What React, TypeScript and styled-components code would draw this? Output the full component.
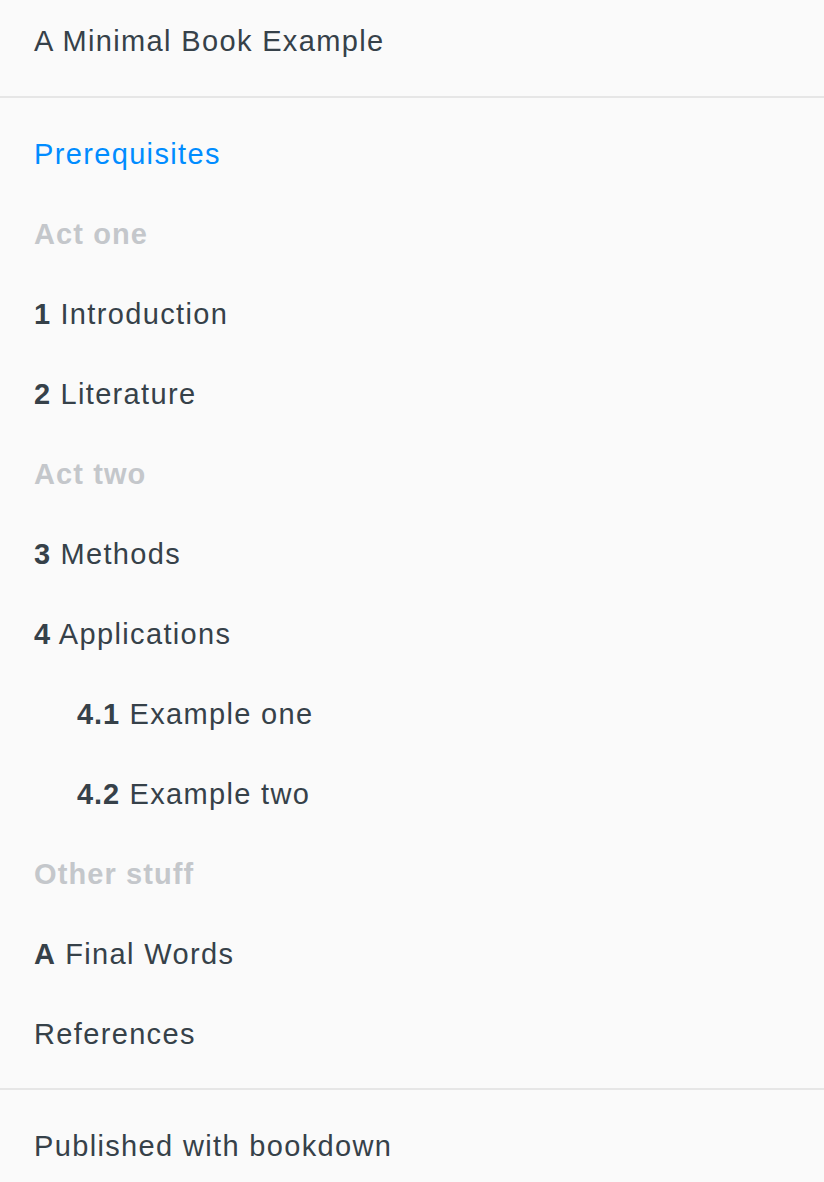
import styled, { createGlobalStyle } from 'styled-components';

type Entry =
  | { kind: 'link'; num?: string; label: string; depth?: number; active?: boolean }
  | { kind: 'part'; label: string };

const entries: Entry[] = [
  { kind: 'link', label: 'Prerequisites', active: true },
  { kind: 'part', label: 'Act one' },
  { kind: 'link', num: '1', label: 'Introduction' },
  { kind: 'link', num: '2', label: 'Literature' },
  { kind: 'part', label: 'Act two' },
  { kind: 'link', num: '3', label: 'Methods' },
  { kind: 'link', num: '4', label: 'Applications' },
  { kind: 'link', num: '4.1', label: 'Example one', depth: 1 },
  { kind: 'link', num: '4.2', label: 'Example two', depth: 1 },
  { kind: 'part', label: 'Other stuff' },
  { kind: 'link', num: 'A', label: 'Final Words' },
  { kind: 'link', label: 'References' },
];

export default function App() {
  return (
    <>
      <GlobalStyle />
      <Sidebar>
        <Summary>
          <Item>
            <ItemLink>A Minimal Book Example</ItemLink>
          </Item>
          <Divider />
          {entries.map((entry) =>
            entry.kind === 'part' ? (
              <PartHeader key={entry.label}>{entry.label}</PartHeader>
            ) : (
              <Item key={entry.label}>
                <ItemLink $active={entry.active} $depth={entry.depth ?? 0}>
                  {entry.num && <Num>{entry.num}</Num>}
                  {entry.num ? ' ' : ''}
                  {entry.label}
                </ItemLink>
              </Item>
            )
          )}
          <Divider $bottom />
          <Item>
            <ItemLink>Published with bookdown</ItemLink>
          </Item>
        </Summary>
      </Sidebar>
    </>
  );
}

const GlobalStyle = createGlobalStyle`
  html, body {
    margin: 0;
    padding: 0;
    background: #fafafa;
  }
  body {
    font-family: "Liberation Sans", Arial, sans-serif;
  }
`;

const Sidebar = styled('nav')`
  width: 824px;
  height: 1182px;
  overflow: hidden;
  background: #fafafa;
`;

const Summary = styled('ul')`
  list-style: none;
  margin: 0;
  padding: 0;
`;

const Item = styled('li')`
  display: block;
`;

const ItemLink = styled('a')<{ $active?: boolean; $depth?: number }>`
  display: block;
  height: 80px;
  box-sizing: border-box;
  padding: 3px 34px 0 ${({ $depth }) => 34 + ($depth ?? 0) * 43}px;
  line-height: 77px;
  font-size: 29px;
  color: ${({ $active }) => ($active ? '#008cff' : '#364149')};
  text-decoration: none;
  white-space: nowrap;
  letter-spacing: 1.35px;
`;

const Num = styled('b')`
  font-weight: 700;
  letter-spacing: 0.9px;
`;

const PartHeader = styled('li')`
  height: 80px;
  box-sizing: border-box;
  padding: 3px 34px 0;
  line-height: 77px;
  font-size: 29px;
  font-weight: 700;
  color: #c4c7cb;
  letter-spacing: 1.1px;
`;

const Divider = styled('li')<{ $bottom?: boolean }>`
  height: 2px;
  margin: ${({ $bottom }) => ($bottom ? '15px 0 15px' : '16px 0 15px')};
  background: #e6e6e6;
`;
